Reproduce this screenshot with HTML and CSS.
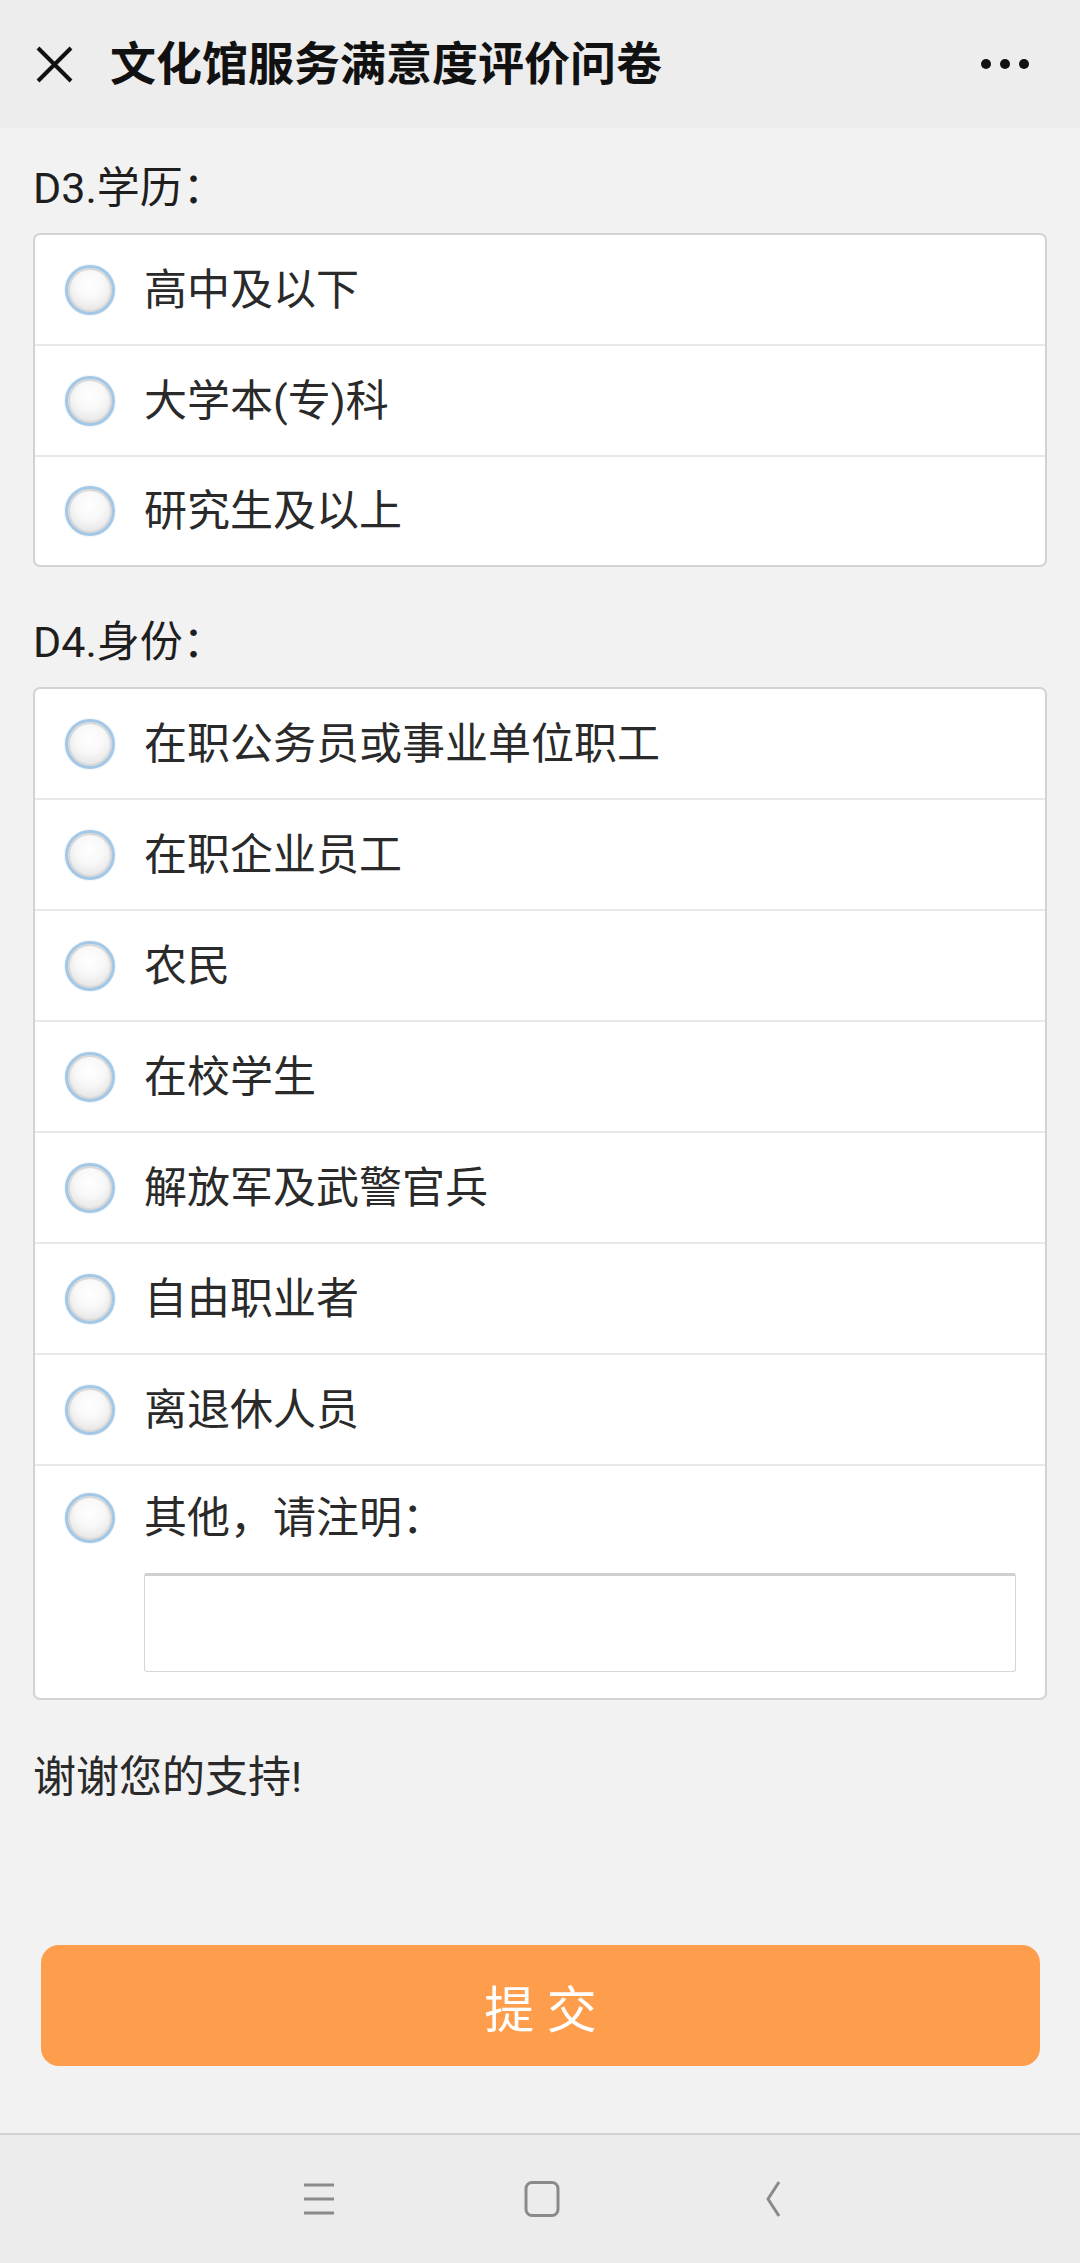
FILE: index.html
```html
<!DOCTYPE html>
<html lang="zh-CN">
<head>
<meta charset="utf-8">
<title>文化馆服务满意度评价问卷</title>
<link rel="stylesheet" href="styles.css">
</head>
<body>
<div class="screen">
  <header class="topbar">
    <svg class="close" viewBox="0 0 37 37" width="37" height="37"><path d="M2 2 L35 35 M35 2 L2 35" stroke="#111" stroke-width="4" fill="none"/></svg>
    <div class="title">文化馆服务满意度评价问卷</div>
    <div class="more"><span></span><span></span><span></span></div>
  </header>

  <main class="content">
    <div class="qlabel">D3.学历：</div>
    <div class="options">
      <div class="opt"><span class="radio"></span><span class="otext">高中及以下</span></div>
      <div class="opt"><span class="radio"></span><span class="otext">大学本(专)科</span></div>
      <div class="opt"><span class="radio"></span><span class="otext">研究生及以上</span></div>
    </div>

    <div class="qlabel q2">D4.身份：</div>
    <div class="options">
      <div class="opt"><span class="radio"></span><span class="otext">在职公务员或事业单位职工</span></div>
      <div class="opt"><span class="radio"></span><span class="otext">在职企业员工</span></div>
      <div class="opt"><span class="radio"></span><span class="otext">农民</span></div>
      <div class="opt"><span class="radio"></span><span class="otext">在校学生</span></div>
      <div class="opt"><span class="radio"></span><span class="otext">解放军及武警官兵</span></div>
      <div class="opt"><span class="radio"></span><span class="otext">自由职业者</span></div>
      <div class="opt"><span class="radio"></span><span class="otext">离退休人员</span></div>
      <div class="opt opt-other">
        <div class="other-line"><span class="radio"></span><span class="otext">其他，请注明：</span></div>
        <div class="other-input"></div>
      </div>
    </div>

    <div class="thanks">谢谢您的支持!</div>

    <div class="submit">提 交</div>
  </main>

  <nav class="navbar">
    <svg class="nav-icon" viewBox="0 0 40 40" width="40" height="40"><path d="M5 6 H35 M5 20 H35 M5 34 H35" stroke="#8a8a8a" stroke-width="3" fill="none"/></svg>
    <svg class="nav-icon" viewBox="0 0 40 40" width="40" height="40"><rect x="4" y="3.5" width="32" height="33" rx="6" stroke="#8a8a8a" stroke-width="3" fill="none"/></svg>
    <svg class="nav-icon" viewBox="0 0 40 40" width="40" height="40"><path d="M34 3 L23 20 L34 37" stroke="#8a8a8a" stroke-width="3" fill="none" stroke-linejoin="round"/></svg>
  </nav>
</div>
</body>
</html>
```

FILE: styles.css
```css
* { box-sizing: border-box; }
html, body {
  margin: 0;
  padding: 0;
  background: #f2f2f2;
  font-family: Roboto, "Noto Sans CJK SC", "Noto Sans", sans-serif;
  color: #2a2a2a;
}
.screen {
  width: 1080px;
  height: 2263px;
  display: flex;
  flex-direction: column;
  overflow: hidden;
}
.topbar {
  flex: none;
  height: 128px;
  background: #ededed;
  display: flex;
  align-items: center;
  padding: 0 51px 0 36px;
}
.close { flex: none; }
.title {
  margin-left: 37px;
  font-size: 46px;
  font-weight: 700;
  color: #111;
  flex: 1;
  line-height: 60px;
}
.more {
  display: flex;
  gap: 9px;
  align-items: center;
}
.more span {
  width: 10px;
  height: 10px;
  border-radius: 50%;
  background: #111;
}
.content {
  padding: 0 33px;
  display: flex;
  flex-direction: column;
}
.qlabel {
  margin-top: 30px;
  font-size: 43px;
  line-height: 60px;
  color: #1e1e1e;
}
.qlabel.q2 { margin-top: 45px; }
.options {
  margin-top: 15px;
  background: #fff;
  border: 2px solid #d3d3d3;
  border-radius: 7px;
}
.opt {
  min-height: 111px;
  display: flex;
  align-items: center;
  padding-left: 30px;
  border-bottom: 2px solid #e8e8e8;
}
.opt:last-child {
  border-bottom: none;
  min-height: 108px;
}
.radio {
  flex: none;
  width: 50px;
  height: 50px;
  border-radius: 50%;
  border: 3px solid #a3c7e5;
  background: radial-gradient(circle at 50% 38%, #ffffff 0, #f8f8f8 40%, #e6e6e6 75%, #d3d3d3 100%);
  box-shadow: inset 0 0 0 2px #d9d9d9, 0 0 2px #bcd7ee;
}
.otext {
  margin-left: 29px;
  font-size: 43px;
  line-height: 60px;
  color: #2a2a2a;
}
.opt-other {
  flex-direction: column;
  align-items: stretch;
  padding-bottom: 26px;
}
.other-line {
  height: 107px;
  display: flex;
  align-items: center;
  padding-bottom: 4px;
}
.other-input {
  height: 99px;
  margin-left: 79px;
  margin-right: 29px;
  background: #fff;
  border: 1px solid #d6d6d6;
  border-top: 3px solid #cfcfcf;
  border-radius: 3px;
}
.thanks {
  margin-top: 47px;
  font-size: 43px;
  line-height: 60px;
  color: #2a2a2a;
}
.submit {
  margin: 138px 7px 0 8px;
  height: 121px;
  border-radius: 18px;
  background: #fe9e4c;
  color: #fff;
  font-size: 50px;
  display: flex;
  align-items: center;
  justify-content: center;
}
.navbar {
  flex: none;
  margin-top: auto;
  height: 130px;
  background: #ececec;
  border-top: 2px solid #d2d2d2;
  display: flex;
  justify-content: center;
  align-items: center;
  gap: 183px;
  padding-left: 4px;
}
.nav-icon { flex: none; }
```
